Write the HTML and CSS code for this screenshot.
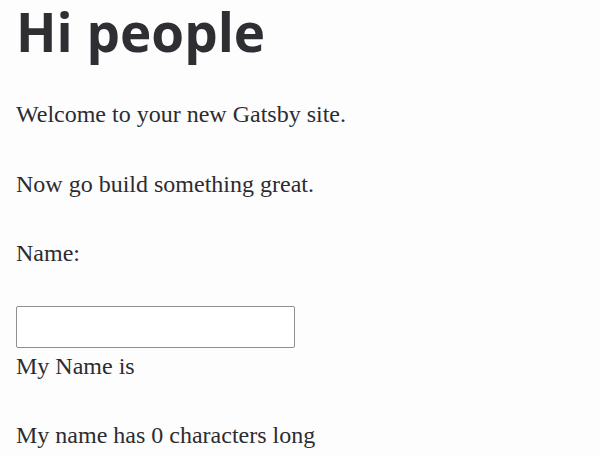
FILE: index.html
```html
<!DOCTYPE html>
<html>
<head>
<meta charset="utf-8">
<link rel="stylesheet" href="styles.css">
</head>
<body>
<main class="page">
  <h1 class="title">Hi people</h1>
  <p class="text">Welcome to your new Gatsby site.</p>
  <p class="text">Now go build something great.</p>
  <p class="text">Name:</p>
  <input class="field" type="text">
  <p class="text">My Name is </p>
  <p class="text">My name has 0 characters long</p>
</main>
</body>
</html>
```

FILE: styles.css
```css
html, body {
  margin: 0;
  padding: 0;
  background: #fefdfe;
}
.page {
  padding: 0 16px;
  color: #2c2c30;
  font-family: "Liberation Serif", serif;
  font-size: 24px;
  line-height: 35px;
}
.title {
  margin: 0 0 33.4px;
  font-family: "Open Sans", "Noto Sans", sans-serif;
  font-weight: 700;
  font-size: 53px;
  line-height: 64px;
  color: #2f2f33;
}
.text {
  margin: 0 0 34.5px;
}
.field {
  display: block;
  box-sizing: border-box;
  width: 279px;
  height: 42px;
  margin: 0 0 1px;
  border: 1px solid #8f8f8f;
  border-radius: 2px;
  background: #fff;
  font: inherit;
}
```
